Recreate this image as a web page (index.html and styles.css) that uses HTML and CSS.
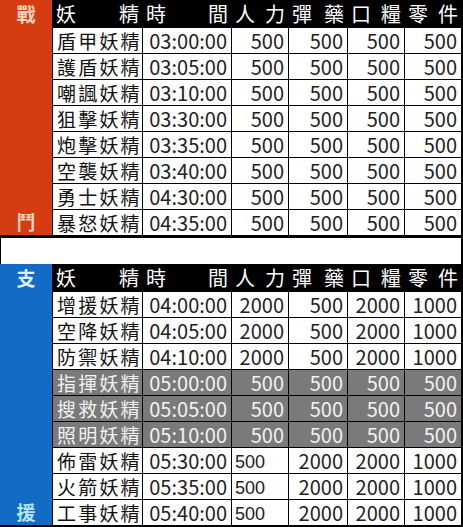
FILE: index.html
```html
<!DOCTYPE html>
<html lang="zh-Hant">
<head>
<meta charset="utf-8">
<link rel="stylesheet" href="styles.css">
</head>
<body>
<div class="sheet">
  <div class="section section-top">
    <div class="label label-red"><span class="lt">戰</span><span class="lb">鬥</span></div>
    <div class="hd"><span>妖</span><span>精</span></div>
    <div class="hd"><span>時</span><span>間</span></div>
    <div class="hd"><span>人</span><span>力</span></div>
    <div class="hd"><span>彈</span><span>藥</span></div>
    <div class="hd"><span>口</span><span>糧</span></div>
    <div class="hd"><span>零</span><span>件</span></div>

    <div class="nm">盾甲妖精</div><div class="tm">03:00:00</div><div class="num">500</div><div class="num">500</div><div class="num">500</div><div class="num">500</div>
    <div class="nm">護盾妖精</div><div class="tm">03:05:00</div><div class="num">500</div><div class="num">500</div><div class="num">500</div><div class="num">500</div>
    <div class="nm">嘲諷妖精</div><div class="tm">03:10:00</div><div class="num">500</div><div class="num">500</div><div class="num">500</div><div class="num">500</div>
    <div class="nm">狙擊妖精</div><div class="tm">03:30:00</div><div class="num">500</div><div class="num">500</div><div class="num">500</div><div class="num">500</div>
    <div class="nm">炮擊妖精</div><div class="tm">03:35:00</div><div class="num">500</div><div class="num">500</div><div class="num">500</div><div class="num">500</div>
    <div class="nm">空襲妖精</div><div class="tm">03:40:00</div><div class="num">500</div><div class="num">500</div><div class="num">500</div><div class="num">500</div>
    <div class="nm">勇士妖精</div><div class="tm">04:30:00</div><div class="num">500</div><div class="num">500</div><div class="num">500</div><div class="num">500</div>
    <div class="nm">暴怒妖精</div><div class="tm">04:35:00</div><div class="num">500</div><div class="num">500</div><div class="num">500</div><div class="num">500</div>
  </div>

  <div class="spacer"></div>

  <div class="section section-bottom">
    <div class="label label-blue"><span class="lt">支</span><span class="lb">援</span></div>
    <div class="hd"><span>妖</span><span>精</span></div>
    <div class="hd"><span>時</span><span>間</span></div>
    <div class="hd"><span>人</span><span>力</span></div>
    <div class="hd"><span>彈</span><span>藥</span></div>
    <div class="hd"><span>口</span><span>糧</span></div>
    <div class="hd"><span>零</span><span>件</span></div>

    <div class="nm">增援妖精</div><div class="tm">04:00:00</div><div class="num">2000</div><div class="num">500</div><div class="num">2000</div><div class="num">1000</div>
    <div class="nm">空降妖精</div><div class="tm">04:05:00</div><div class="num">2000</div><div class="num">500</div><div class="num">2000</div><div class="num">1000</div>
    <div class="nm">防禦妖精</div><div class="tm">04:10:00</div><div class="num">2000</div><div class="num">500</div><div class="num">2000</div><div class="num">1000</div>

    <div class="nm gray">指揮妖精</div><div class="tm gray">05:00:00</div><div class="num gray">500</div><div class="num gray">500</div><div class="num gray">500</div><div class="num gray">500</div>
    <div class="nm gray">搜救妖精</div><div class="tm gray">05:05:00</div><div class="num gray">500</div><div class="num gray">500</div><div class="num gray">500</div><div class="num gray">500</div>
    <div class="nm gray">照明妖精</div><div class="tm gray">05:10:00</div><div class="num gray">500</div><div class="num gray">500</div><div class="num gray">500</div><div class="num gray">500</div>

    <div class="nm">佈雷妖精</div><div class="tm">05:30:00</div><div class="num left">500</div><div class="num">2000</div><div class="num">2000</div><div class="num">1000</div>
    <div class="nm">火箭妖精</div><div class="tm">05:35:00</div><div class="num left">500</div><div class="num">2000</div><div class="num">2000</div><div class="num">1000</div>
    <div class="nm">工事妖精</div><div class="tm">05:40:00</div><div class="num left">500</div><div class="num">2000</div><div class="num">2000</div><div class="num">1000</div>
  </div>
</div>
</body>
</html>
```

FILE: styles.css
```css
html, body {
  margin: 0;
  padding: 0;
  background: #ffffff;
}

.sheet {
  width: 463px;
  height: 527px;
  font-family: "Noto Sans CJK TC", "Noto Sans", sans-serif;
  color: #111;
}

.section {
  display: grid;
  grid-template-columns: 52px 89px 88px 56px 58px 56px 56px;
  column-gap: 1px;
  row-gap: 1px;
  background: #000;
  border-right: 2px solid #000;
}

.section-top {
  grid-template-rows: 27px repeat(8, 25px);
  border-bottom: 3px solid #000;
}

.section-bottom {
  grid-template-rows: 27px repeat(9, 25px);
  border-bottom: 2px solid #000;
}

.spacer {
  height: 26px;
  border-left: 1px solid #000;
  border-right: 2px solid #000;
  background: #fff;
}

.label {
  grid-row: 1 / -1;
  display: flex;
  flex-direction: column;
  justify-content: space-between;
  align-items: center;
  font-size: 19px;
  font-weight: 700;
  line-height: 22px;
  padding: 3px 0 2px;
}

.label-red {
  background: #d43c12;
  color: #fbd2bd;
}

.label-blue {
  background: #126cc6;
  color: #dff3ff;
}

.label-blue .lb {
  color: #b4e6fb;
}

.hd {
  background: #000;
  color: #fff;
  display: flex;
  justify-content: space-between;
  align-items: center;
  font-size: 20px;
  line-height: 25px;
  padding: 0 3px 0 3px;
}

.nm,
.tm,
.num {
  background: #fff;
  display: flex;
  align-items: center;
  line-height: 24px;
  white-space: nowrap;
}

.nm {
  font-size: 19px;
  letter-spacing: 2.2px;
  padding-left: 4px;
  padding-top: 1px;
}

.tm {
  justify-content: flex-end;
  font-size: 20px;
  padding-right: 4px;
  color: #222;
}

.num {
  justify-content: flex-end;
  font-size: 20px;
  padding-right: 4px;
  color: #222;
}

.num.left {
  justify-content: flex-start;
  align-items: flex-end;
  font-family: "Liberation Sans", sans-serif;
  font-size: 18px;
  line-height: 20px;
  padding-left: 3px;
  padding-bottom: 1px;
}

.gray {
  background: #7a7a7a;
  color: #f2f2f2;
}
```
